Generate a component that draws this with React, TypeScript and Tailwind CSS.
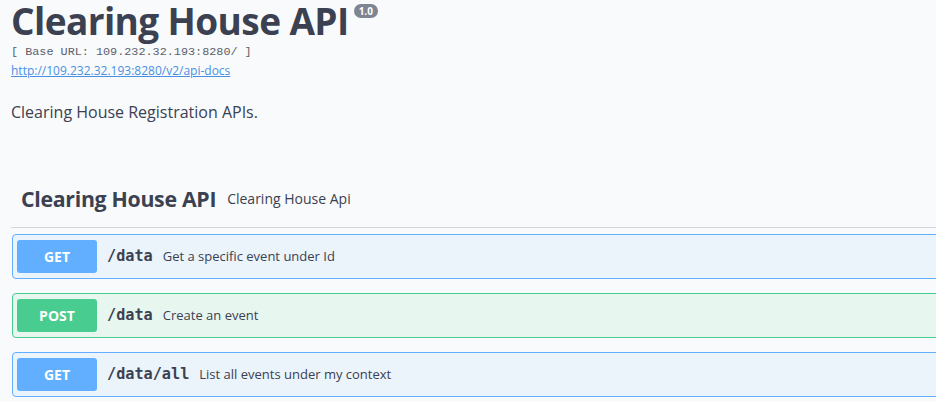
import React from 'react';

const ops = [
    { method: 'GET', path: '/data', summary: 'Get a specific event under Id' },
    { method: 'POST', path: '/data', summary: 'Create an event' },
    { method: 'GET', path: '/data/all', summary: 'List all events under my context' },
];

const sans = "font-['Open_Sans',sans-serif]";
const mono = "font-['DejaVu_Sans_Mono','Liberation_Mono',monospace]";

export default function App() {
    return (
        <div className={`w-[936px] h-[402px] overflow-hidden bg-[#f9fafc] text-[#3b4151] ${sans}`}>
            <div className="pl-[11px]">
                {/* Info header */}
                <div className="flex items-start">
                    <h1 className="text-[37px] font-bold leading-[42px] tracking-[-0.6px] text-[#3b4151]">
                        Clearing House API
                    </h1>
                    <span className="ml-[5px] mt-[4px] rounded-full bg-[#7d8492] px-[5px] py-[1px] text-[10px] font-bold leading-[12px] text-white">
                        1.0
                    </span>
                </div>
                <div className="mt-[3px] font-['Liberation_Mono',monospace] text-[11.8px] leading-[14px] text-[#5b606b]">
                    [ Base URL: 109.232.32.193:8280/ ]
                </div>
                <a className="mt-[4px] block text-[12px] leading-[16px] text-[#4990e2] underline" href="#">
                    http://109.232.32.193:8280/v2/api-docs
                </a>
                <p className="mt-[22px] text-[16px] leading-[22px]">Clearing House Registration APIs.</p>

                {/* Tag */}
                <div className="mt-[61px] flex items-center border-b border-[#d4d6da] pb-[13px] pl-[10px]">
                    <span className="text-[21.3px] font-bold leading-[30px] tracking-[-0.3px]">Clearing House API</span>
                    <span className="ml-[11px] text-[14px] leading-[20px]">Clearing House Api</span>
                </div>

                {/* Operations */}
                <div className="-mr-[20px] mt-[6px] flex flex-col gap-[14px] pl-[1px]">
                    {ops.map((op, i) => {
                        const post = op.method === 'POST';
                        return (
                            <div
                                key={i}
                                className={`flex h-[45px] items-center rounded-[4px] border pl-[4px] ${
                                    post ? 'border-[#49cc90] bg-[#e8f6f0]' : 'border-[#61affe] bg-[#ebf3fb]'
                                }`}
                            >
                                <span
                                    className={`flex h-[33px] w-[80px] items-center justify-center rounded-[3px] text-[14px] font-bold text-white ${
                                        post ? 'bg-[#49cc90]' : 'bg-[#61affe]'
                                    }`}
                                >
                                    {op.method}
                                </span>
                                <span className={`ml-[10px] text-[15.2px] font-bold ${mono}`}>{op.path}</span>
                                <span className="ml-[10px] text-[13px]">{op.summary}</span>
                            </div>
                        );
                    })}
                </div>
            </div>
        </div>
    );
}
